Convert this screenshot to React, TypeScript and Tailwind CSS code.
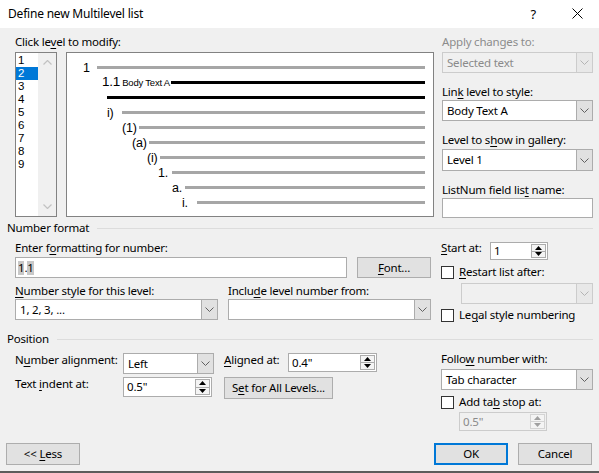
import React from 'react'

type Node = { children: React.ReactNode }

// access-key letter
const U = ({ children }: Node) => <span className="underline underline-offset-2">{children}</span>

function Chevron({ muted }: { muted?: boolean }) {
  return (
    <svg width="9" height="5" viewBox="0 0 9 5">
      <path d="M0.5 0.5 L4.5 4.5 L8.5 0.5" fill="none" stroke={muted ? '#b4b4b4' : '#606060'} strokeWidth="1" />
    </svg>
  )
}

function Combo({ value, className = '', disabled }: { value?: React.ReactNode; className?: string; disabled?: boolean }) {
  return (
    <div
      className={`flex border ${
        disabled ? 'border-[#cccccc] bg-[#f0f0f0] text-[#8a8a8a]' : 'border-[#acacac] bg-white'
      } ${className}`}
    >
      <div className="flex flex-1 items-center pl-[4px]">{value}</div>
      <div
        className={`flex w-[16px] items-center justify-center border-l ${
          disabled ? 'border-[#cccccc] bg-[#e8e8e8]' : 'border-[#acacac] bg-[#e1e1e1]'
        }`}
      >
        <Chevron muted={disabled} />
      </div>
    </div>
  )
}

function Spin({ value, className = '', disabled }: { value?: React.ReactNode; className?: string; disabled?: boolean }) {
  const arrow = disabled ? '#a0a0a0' : '#000'
  return (
    <div
      className={`flex border py-[1px] pr-[1px] ${
        disabled ? 'border-[#cccccc] bg-[#f0f0f0] text-[#8a8a8a]' : 'border-[#acacac] bg-white'
      } ${className}`}
    >
      <div className="flex flex-1 items-center pl-[3px]">{value}</div>
      <div className={`flex w-[15px] flex-col border ${disabled ? 'border-[#d4d4d4]' : 'border-[#acacac]'} bg-[#f4f4f4]`}>
        <div className={`flex flex-1 items-center justify-center border-b ${disabled ? 'border-[#d4d4d4]' : 'border-[#acacac]'}`}>
          <svg width="7" height="4" viewBox="0 0 7 4">
            <path d="M0 4 L3.5 0 L7 4Z" fill={arrow} />
          </svg>
        </div>
        <div className="flex flex-1 items-center justify-center">
          <svg width="7" height="4" viewBox="0 0 7 4">
            <path d="M0 0 L3.5 4 L7 0Z" fill={arrow} />
          </svg>
        </div>
      </div>
    </div>
  )
}

function Check({ children }: Node) {
  return (
    <div className="flex items-center">
      <div className="h-[13px] w-[13px] border border-[#333333] bg-white" />
      <span className="ml-[5px]">{children}</span>
    </div>
  )
}

function Btn({ children, className = '' }: Node & { className?: string }) {
  return (
    <div className={`flex items-center justify-center border border-[#adadad] bg-[#e1e1e1] ${className}`}>{children}</div>
  )
}

function Section({ title }: { title: string }) {
  return (
    <div className="-ml-[8px] flex h-[14px] items-center">
      <span>{title}</span>
      <div className="ml-[8px] h-px flex-1 bg-[#dcdcdc]" />
    </div>
  )
}

const LEVELS = ['1', '2', '3', '4', '5', '6', '7', '8', '9']

const ROWS = [
  { pad: 'pl-[40px]', w: 'w-[15px]', label: 'i)' },
  { pad: 'pl-[55px]', w: 'w-[17px]', label: '(1)' },
  { pad: 'pl-[65px]', w: 'w-[17px]', label: '(a)' },
  { pad: 'pl-[80px]', w: 'w-[13px]', label: '(i)' },
  { pad: 'pl-[91px]', w: 'w-[14px]', label: '1.' },
  { pad: 'pl-[105px]', w: 'w-[13px]', label: 'a.' },
  { pad: 'pl-[115px]', w: 'w-[15px]', label: 'i.' },
]

function Preview() {
  return (
    <div className="ml-[9px] flex h-[165px] w-[368px] flex-col border border-[#828282] bg-white pr-[8px] pt-[7px] font-['Liberation_Sans',Arial,sans-serif] text-[12.5px]">
      <div className="flex h-[15px] items-center pl-[16px]">
        <span className="w-[14px]">1</span>
        <div className="h-[3px] flex-1 bg-[#a6a6a6]" />
      </div>
      <div className="flex h-[15px] items-center pl-[35px]">
        <span className="flex items-baseline">
          <span className="text-[13.5px]">1.1</span>
          <span className="ml-[2px] text-[9.5px]">Body Text A</span>
        </span>
        <div className="ml-[1px] h-[3px] flex-1 bg-black" />
      </div>
      <div className="flex h-[15px] items-center pl-[40px]">
        <div className="h-[3px] flex-1 bg-black" />
      </div>
      {ROWS.map((r) => (
        <div key={r.label + r.pad} className={`flex h-[15px] items-center ${r.pad}`}>
          <span className={r.w}>{r.label}</span>
          <div className="h-[3px] flex-1 bg-[#a6a6a6]" />
        </div>
      ))}
    </div>
  )
}

function LevelList() {
  return (
    <div className="flex h-[165px] w-[42px] border border-[#828282] bg-white">
      <div className="flex w-[22px] flex-col pt-[1px] font-['Liberation_Sans',Arial,sans-serif] text-[11.5px] tracking-normal">
        {LEVELS.map((n) => (
          <div key={n} className={`h-[13px] pl-[2px] leading-[13px] ${n === '2' ? 'bg-[#0078d7] text-white' : ''}`}>
            {n}
          </div>
        ))}
      </div>
      <div className="flex flex-1 flex-col items-center justify-between bg-[#f0f0f0] py-[7px]">
        <svg width="9" height="5" viewBox="0 0 9 5">
          <path d="M0.5 4.5 L4.5 0.5 L8.5 4.5" fill="none" stroke="#c2c2c2" strokeWidth="1.2" />
        </svg>
        <svg width="9" height="5" viewBox="0 0 9 5">
          <path d="M0.5 0.5 L4.5 4.5 L8.5 0.5" fill="none" stroke="#c2c2c2" strokeWidth="1.2" />
        </svg>
      </div>
    </div>
  )
}

export default function App() {
  return (
    <div className="flex h-[473px] w-[599px] flex-col overflow-hidden bg-[#f0f0f0] font-['Noto_Sans',sans-serif] text-[11.5px] leading-[14px] tracking-[-0.2px] text-black">
      {/* Title bar */}
      <div className="flex h-[28px] shrink-0 items-center bg-white pb-[1px] pl-[8px]">
        <span className="text-[12px]">Define new Multilevel list</span>
        <span className="ml-auto text-[13px]">?</span>
        <svg className="ml-[36px] mr-[16px]" width="11" height="11" viewBox="0 0 11 11">
          <path d="M0.5 0.5 L10.5 10.5 M10.5 0.5 L0.5 10.5" stroke="#000" strokeWidth="1" />
        </svg>
      </div>

      <div className="flex flex-col pl-[15px] pr-[6px] pt-[7px]">
        {/* Level pick + preview + style links */}
        <div className="flex">
          <div className="flex flex-col">
            <span>
              Click le<U>v</U>el to modify:
            </span>
            <div className="mt-[3px] flex">
              <LevelList />
              <Preview />
            </div>
          </div>
          <div className="ml-[8px] flex w-[152px] flex-col">
            <span className="text-[#8c8c8c]">Apply changes to:</span>
            <Combo disabled className="mt-[3px] h-[21px]" value="Selected text" />
            <span className="mt-[12px]">
              Lin<U>k</U> level to style:
            </span>
            <Combo className="mt-[1px] h-[21px]" value="Body Text A" />
            <span className="mt-[12px]">
              Level to s<U>h</U>ow in gallery:
            </span>
            <Combo className="mt-[2px] h-[22px]" value="Level 1" />
            <span className="mt-[12px]">
              ListNum field lis<U>t</U> name:
            </span>
            <div className="mt-[1px] h-[20px] border border-[#acacac] bg-white" />
          </div>
        </div>

        {/* Number format */}
        <div className="mt-[3px]">
          <Section title="Number format" />
        </div>
        <div className="flex">
          <div className="flex w-[416px] flex-col">
            <span className="mt-[6px]">
              Enter f<U>o</U>rmatting for number:
            </span>
            <div className="mt-[2px] flex">
              <div className="flex h-[21px] w-[332px] items-center border border-[#acacac] bg-white pl-[2px]">
                <span className="bg-[#c8c8c8]">1</span>
                <span>.</span>
                <span className="bg-[#c8c8c8]">1</span>
              </div>
              <Btn className="ml-[10px] h-[21px] w-[74px]">
                <span>
                  <U>F</U>ont...
                </span>
              </Btn>
            </div>
            <div className="mt-[6px] flex gap-[10px]">
              <div className="flex w-[203px] flex-col">
                <span>
                  <U>N</U>umber style for this level:
                </span>
                <Combo className="mt-[1px] h-[21px]" value="1, 2, 3, ..." />
              </div>
              <div className="flex w-[203px] flex-col">
                <span>
                  Inclu<U>d</U>e level number from:
                </span>
                <Combo className="mt-[1px] h-[21px]" />
              </div>
            </div>
          </div>
          <div className="ml-[10px] flex w-[152px] flex-col">
            <div className="mt-[7px] flex items-start">
              <span className="-mt-[1px] w-[49px]">
                <U>S</U>tart at:
              </span>
              <Spin className="h-[18px] w-[58px]" value="1" />
            </div>
            <div className="mt-[5px]">
              <Check>
                <U>R</U>estart list after:
              </Check>
            </div>
            <Combo disabled className="ml-[20px] mt-[4px] h-[21px]" />
            <div className="mt-[4px]">
              <Check>
                Le<U>g</U>al style numbering
              </Check>
            </div>
          </div>
        </div>

        {/* Position */}
        <div className="mt-[10px]">
          <Section title="Position" />
        </div>
        <div className="flex">
          <div className="flex w-[416px] flex-col">
            <div className="mt-[7px] flex items-start">
              <span className="w-[108px]">
                N<U>u</U>mber alignment:
              </span>
              <Combo className="h-[21px] w-[91px]" value="Left" />
              <span className="ml-[10px] w-[64px]">
                <U>A</U>ligned at:
              </span>
              <Spin className="h-[19px] w-[89px]" value={'0.4"'} />
            </div>
            <div className="mt-[3px] flex items-start">
              <span className="w-[108px]">
                Text <U>i</U>ndent at:
              </span>
              <Spin className="h-[20px] w-[89px]" value={'0.5"'} />
              <Btn className="ml-[12px] h-[22px] w-[109px]">
                <span>
                  S<U>e</U>t for All Levels...
                </span>
              </Btn>
            </div>
          </div>
          <div className="ml-[10px] flex w-[152px] flex-col">
            <span className="mt-[6px]">
              Follo<U>w</U> number with:
            </span>
            <Combo className="mt-[3px] h-[21px]" value="Tab character" />
            <div className="mt-[5px]">
              <Check>
                Add ta<U>b</U> stop at:
              </Check>
            </div>
            <Spin disabled className="ml-[18px] mt-[3px] h-[19px] w-[88px]" value={'0.5"'} />
          </div>
        </div>

        {/* Dialog buttons */}
        <div className="-ml-[9px] mt-[12px] flex">
          <Btn className="h-[22px] w-[74px]">
            <span>
              {'<< '}
              <U>L</U>ess
            </span>
          </Btn>
          <div className="ml-auto flex h-[22px] w-[74px] items-center justify-center border-2 border-[#0078d7] bg-[#e1e1e1]">
            OK
          </div>
          <Btn className="ml-[10px] mr-[1px] h-[22px] w-[74px]">Cancel</Btn>
        </div>
      </div>

      <div className="mt-auto h-[2px] shrink-0 bg-[#5c5c5c]" />
    </div>
  )
}
